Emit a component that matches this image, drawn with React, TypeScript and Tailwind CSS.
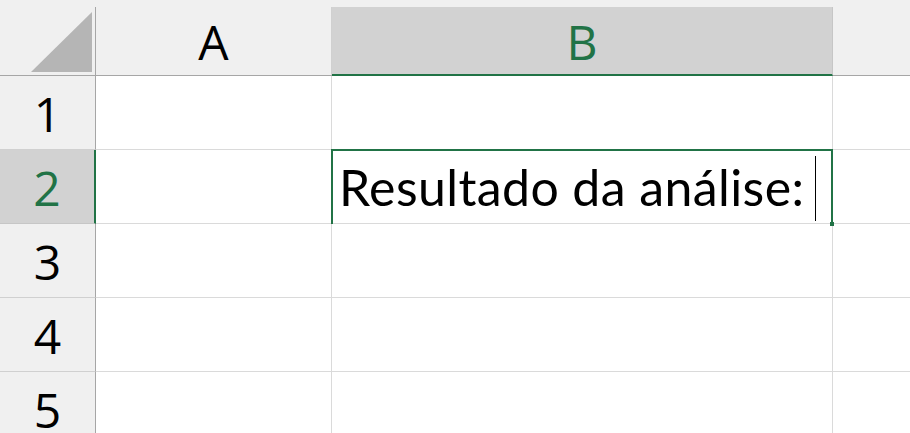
import React from "react";

const headFont = { fontFamily: '"Open Sans", "Noto Sans", sans-serif' };
const cellFont = { fontFamily: 'Lato, "Open Sans", sans-serif' };

function RowHead({ n, active }: { n: number; active?: boolean }) {
  return (
    <div
      className={
        "flex items-center justify-center text-[48px] leading-none border-b " +
        (active
          ? "bg-[#d2d2d2] text-[#217346] border-r-2 border-r-[#217346] border-b-[#c6c6c6]"
          : "bg-[#f0f0f0] text-black border-r border-r-[#a6a6a6] border-b-[#d0d0d0]")
      }
      style={headFont}
    >
      <span className="pt-[3px]">{n}</span>
    </div>
  );
}

function Cell({ last }: { last?: boolean }) {
  return <div className={"border-b border-[#dadada] " + (last ? "" : "border-r")} />;
}

export default function App() {
  return (
    <div className="w-[910px] h-[433px] overflow-hidden bg-white">
      <div className="grid grid-cols-[96px_236px_501px_77px] grid-rows-[76px_74px_74px_74px_74px_74px]">
        {/* corner */}
        <div className="bg-[#f0f0f0] border-b border-[#a6a6a6] flex flex-col">
          <div className="h-[7px]" />
          <div className="flex-1 border-r border-[#a6a6a6]">
            <svg width="95" height="68" viewBox="0 7 95 68" className="block">
              <polygon points="31,72 92,72 92,12" fill="#b5b5b5" />
            </svg>
          </div>
        </div>
        {/* A header */}
        <div className="bg-[#f0f0f0] border-b border-[#a6a6a6] flex flex-col">
          <div className="h-[7px]" />
          <div
            className="flex-1 flex items-center justify-center text-[48px] leading-none text-black border-r border-[#d0d0d0]"
            style={headFont}
          >
            <span className="pt-[2px]">A</span>
          </div>
        </div>
        {/* B header */}
        <div className="bg-[#f0f0f0] flex flex-col">
          <div className="h-[7px]" />
          <div
            className="flex-1 flex items-center justify-center text-[48px] leading-none text-[#217346] bg-[#d2d2d2] border-r border-[#c6c6c6] border-b-2 border-b-[#217346]"
            style={headFont}
          >
            <span className="pt-[2px]">B</span>
          </div>
        </div>
        {/* C header */}
        <div className="bg-[#f0f0f0] border-b border-[#a6a6a6] flex flex-col">
          <div className="h-[7px]" />
          <div className="flex-1" />
        </div>

        {/* row 1 */}
        <RowHead n={1} />
        <Cell />
        <Cell />
        <Cell last />

        {/* row 2 */}
        <RowHead n={2} active />
        <Cell />
        <div className="relative border-b border-r border-[#dadada]">
          <div className="absolute -top-px -left-px -right-px -bottom-px border-t-2 border-l-2 border-r-2 border-[#217346]" />
          <div className="absolute -right-[2px] -bottom-[3px] w-[4px] h-[4px] bg-[#217346]" />
          <div className="flex items-end h-full pl-[7px] pb-[6px]" style={cellFont}>
            <span className="text-[50px] leading-[60px] tracking-[0.4px] text-black whitespace-nowrap">
              Resultado da análise:
            </span>
            <span className="ml-[11px] mb-[-4px] inline-block w-px h-[65px] bg-black self-end" />
          </div>
        </div>
        <Cell last />

        {/* row 3 */}
        <RowHead n={3} />
        <Cell />
        <Cell />
        <Cell last />

        {/* row 4 */}
        <RowHead n={4} />
        <Cell />
        <Cell />
        <Cell last />

        {/* row 5 */}
        <RowHead n={5} />
        <Cell />
        <Cell />
        <Cell last />
      </div>
    </div>
  );
}
